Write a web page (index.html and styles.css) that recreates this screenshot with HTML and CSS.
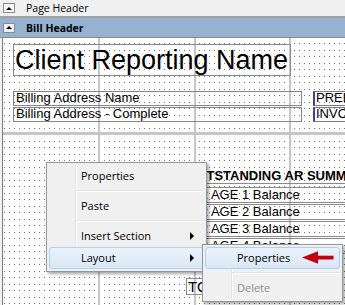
FILE: index.html
```html
<!DOCTYPE html>
<html>
<head>
<meta charset="utf-8">
<title>Report Designer</title>
<link rel="stylesheet" href="styles.css">
</head>
<body>
<div class="designer">
  <div class="band band-page">
    <span class="toggle"><span class="tri"></span></span>
    <span class="band-title">Page Header</span>
  </div>
  <div class="band band-bill">
    <span class="toggle"><span class="tri"></span></span>
    <span class="band-title bold">Bill Header</span>
  </div>
  <div class="canvas">
    <div class="guide-v g1"></div>
    <div class="guide-v g2"></div>
    <div class="guide-v g3"></div>
    <div class="guide-h"></div>

    <div class="field f-title">Client Reporting Name</div>
    <div class="field f-addr a1">Billing Address Name</div>
    <div class="field f-addr a2">Billing Address - Complete</div>
    <div class="field f-code c1">PREBILL</div>
    <div class="field f-code c2">INVOICE</div>

    <div class="field f-summary">OUTSTANDING AR SUMMARY</div>
    <div class="field f-row r1">AR AGE 1 Balance</div>
    <div class="field f-row r2">AR AGE 2 Balance</div>
    <div class="field f-row r3">AR AGE 3 Balance</div>
    <div class="field f-row r4">AR AGE 4 Balance</div>
    <div class="field f-total">TOTAL</div>
  </div>

  <div class="menu ctx">
    <div class="mi">Properties</div>
    <div class="sep"></div>
    <div class="mi">Paste</div>
    <div class="sep"></div>
    <div class="mi has-sub">Insert Section<span class="caret"></span></div>
    <div class="mi hot has-sub">Layout<span class="caret"></span></div>
  </div>

  <div class="menu sub">
    <div class="mi hot">Properties</div>
    <div class="sep"></div>
    <div class="mi disabled">Delete</div>
  </div>

  <svg class="callout" width="36" height="16" viewBox="0 0 36 16">
    <polygon points="2,7.5 18,1.2 18,13.8" fill="#c40012"/>
    <rect x="16" y="5.7" width="17.5" height="3.8" fill="#c40012"/>
  </svg>
</div>
</body>
</html>
```

FILE: styles.css
```css
html, body {
  margin: 0;
  padding: 0;
}

body {
  width: 345px;
  height: 305px;
  overflow: hidden;
  background: #f0f0f0;
  font-family: "Open Sans", "Liberation Sans", sans-serif;
}

.designer {
  position: relative;
  width: 345px;
  height: 305px;
  overflow: hidden;
  background: #f0f0f0;
  display: flex;
  flex-direction: column;
}

/* ---------- section bands ---------- */
.band {
  display: flex;
  align-items: center;
  gap: 11px;
  padding-left: 3px;
  box-sizing: border-box;
  flex: none;
  font-size: 10.5px;
  color: #000;
}

.band-page {
  height: 18px;
  background: #f0f0f0;
  border-bottom: 2px solid #a2a2a2;
}

.band-bill {
  height: 20px;
  background: #95b3d1;
  border-bottom: 1px solid #8a8a8a;
}

.toggle {
  width: 12px;
  height: 10px;
  box-sizing: border-box;
  border: 1px solid #8a8a8a;
  background: #f7f7f7;
  display: flex;
  align-items: center;
  justify-content: center;
}

.band-bill .toggle {
  background: #eef0f2;
}

.tri {
  width: 0;
  height: 0;
  border-left: 3px solid transparent;
  border-right: 3px solid transparent;
  border-bottom: 3px solid #000;
}

.band-title {
  line-height: 14px;
}

.bold {
  font-weight: 700;
}

/* ---------- design canvas ---------- */
.canvas {
  position: relative;
  flex: 1;
  margin-left: 2px;
  border-left: 1px solid #7c7c7c;
  background-color: #707070;
  background-image:
    linear-gradient(to bottom,
      transparent 0, transparent 1px,
      #ffffff 1px, #ffffff 6px,
      transparent 6px, transparent 7px,
      #ffffff 7px, #ffffff 13px),
    linear-gradient(to right, transparent 0, transparent 1px, #ffffff 1px, #ffffff 5px);
  background-size: 5px 13px, 5px 13px;
  background-position: 1px 12px, 1px 12px;
}

.guide-v {
  position: absolute;
  top: 0;
  bottom: 0;
  width: 2px;
  background: #c6c6c6;
}
.g1 { left: 95px; }
.g2 { left: 191px; }
.g3 { left: 286px; }

.guide-h {
  position: absolute;
  left: 0;
  right: 0;
  top: 94px;
  height: 3px;
  background: #c6c6c6;
}

.field {
  position: absolute;
  box-sizing: border-box;
  font-family: "Liberation Sans", Arial, sans-serif;
  color: #000;
  white-space: nowrap;
  overflow: hidden;
}

.f-title {
  left: 10px;
  top: 6px;
  width: 278px;
  height: 32px;
  border: 1px solid #8a8a8a;
  font-size: 27px;
  line-height: 30px;
  padding-left: 1px;
}

.f-addr {
  left: 10px;
  width: 289px;
  height: 15px;
  border: 1px solid #858585;
  font-size: 13px;
  line-height: 12px;
  padding-left: 2px;
}
.a1 { top: 53px; }
.a2 { top: 69px; }

.f-code {
  left: 310px;
  width: 70px;
  height: 15px;
  border: 1px solid #7a7a8c;
  border-left: 2px solid #4a3f8e;
  font-size: 13px;
  line-height: 12px;
  padding-left: 1px;
}
.c1 { top: 53px; }
.c2 { top: 69px; }

.f-summary {
  left: 183px;
  top: 131px;
  width: 200px;
  height: 15px;
  border-bottom: 1px solid #8a8a8a;
  font-size: 13px;
  font-weight: 700;
  line-height: 14px;
  padding-left: 1px;
}

.f-row {
  left: 183px;
  width: 200px;
  height: 16px;
  border: 1px solid #8a8a8a;
  font-size: 13px;
  line-height: 14px;
  padding-left: 3px;
}
.r1 { top: 149px; }
.r2 { top: 166px; }
.r3 { top: 183px; }
.r4 { top: 200px; }

.f-total {
  left: 183px;
  top: 240px;
  width: 70px;
  height: 17px;
  border: 1px solid #8a8a8a;
  font-size: 15px;
  line-height: 15px;
  padding-left: 1px;
}

/* ---------- context menus ---------- */
.menu {
  position: absolute;
  box-sizing: border-box;
  background: #f0f0f0;
  border: 1px solid #979797;
  padding: 2px;
  box-shadow: 2px 2px 3px rgba(0, 0, 0, 0.35);
  font-family: "Open Sans", "Liberation Sans", sans-serif;
  font-size: 11px;
  color: #000;
}

.menu::before {
  content: "";
  position: absolute;
  left: 28px;
  top: 2px;
  bottom: 2px;
  width: 0;
  border-left: 1px solid #e2e3e3;
  border-right: 1px solid #ffffff;
}

.ctx {
  left: 46px;
  top: 162px;
  width: 161px;
  height: 110px;
}

.sub {
  left: 202px;
  top: 244px;
  width: 141px;
  height: 58px;
}

.mi {
  position: relative;
  box-sizing: border-box;
  height: 22px;
  line-height: 20px;
  padding-left: 31px;
  border: 1px solid transparent;
  border-radius: 3px;
}

.mi.hot {
  background: linear-gradient(to bottom, #eaf3fc, #dae7f5);
  border-color: #a9d3f0;
}

.mi.disabled {
  color: #8d8d8d;
}

.caret {
  position: absolute;
  right: 9px;
  top: 6px;
  width: 0;
  height: 0;
  border-top: 4px solid transparent;
  border-bottom: 4px solid transparent;
  border-left: 4px solid #000;
}

.sep {
  position: relative;
  height: 8px;
}

.sep::after {
  content: "";
  position: absolute;
  left: 27px;
  right: 0;
  top: 3px;
  height: 0;
  border-top: 1px solid #e2e3e3;
  border-bottom: 1px solid #ffffff;
}

/* ---------- annotation arrow ---------- */
.callout {
  position: absolute;
  left: 300px;
  top: 250px;
}
```
